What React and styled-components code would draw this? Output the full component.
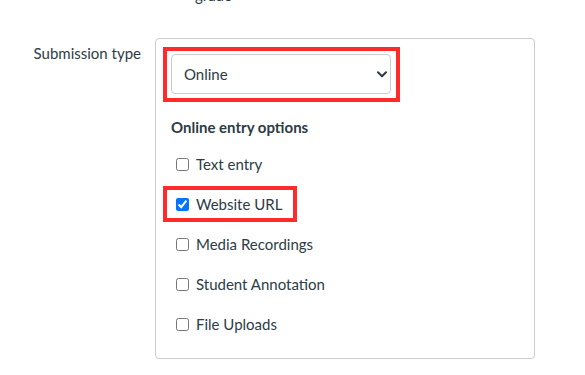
import React from "react";
import styled, { createGlobalStyle } from "styled-components";

const GlobalStyle = createGlobalStyle`
  html, body {
    margin: 0;
    padding: 0;
    background: #ffffff;
  }
  body {
    font-family: Lato, "Noto Sans", "Liberation Sans", sans-serif;
    color: #2d3b45;
    overflow: hidden;
  }
`;

const Page = styled.div`
  width: 585px;
  height: 375px;
  overflow: hidden;
`;

const GradeNote = styled.div`
  margin: -14px 0 0 195px;
  font-size: 15px;
  line-height: 18px;
`;

const FormRow = styled.div`
  display: grid;
  grid-template-columns: 155px 380px;
  margin-top: 34px;
  align-items: start;
`;

const FieldLabel = styled.div`
  text-align: right;
  padding: 6px 14px 0 0;
  font-size: 15px;
  line-height: 18px;
`;

const Fieldset = styled.div`
  box-sizing: border-box;
  border: 1px solid #c7cdd1;
  border-radius: 4px;
  padding: 8px 0 16px 7px;
  display: flex;
  flex-direction: column;
  align-items: flex-start;
`;

const Highlight = styled.div`
  border: 4px solid ${(p) => (p.$on ? "#ff2a2a" : "transparent")};
`;

const SelectFrame = styled(Highlight)`
  padding: 3px 5px 4px 4px;
`;

const SelectWrap = styled.div`
  position: relative;
  width: 220px;
  height: 40px;
`;

const Select = styled.select`
  appearance: none;
  -webkit-appearance: none;
  box-sizing: border-box;
  width: 100%;
  height: 100%;
  border: 1px solid #c7cdd1;
  border-radius: 4px;
  background: #ffffff;
  padding: 0 30px 0 12px;
  font-family: Lato, "Noto Sans", "Liberation Sans", sans-serif;
  font-size: 15px;
  color: #2d3b45;
  outline: none;
`;

const Chevron = styled.svg`
  position: absolute;
  right: 4px;
  top: 17px;
  pointer-events: none;
`;

const Heading = styled.div`
  margin: 16px 0 10px 8px;
  font-size: 15px;
  line-height: 18px;
  font-weight: 700;
`;

const OptionList = styled.div`
  display: flex;
  flex-direction: column;
  align-items: flex-start;
  gap: 4px;
`;

const OptionRow = styled(Highlight)`
  box-sizing: border-box;
  height: 36px;
  display: inline-flex;
  align-items: center;
  gap: 7px;
  padding: 0 11px 0 9px;
  font-size: 15px;
  line-height: 18px;
  cursor: default;
`;

const Checkbox = styled.input`
  width: 13px;
  height: 13px;
  margin: 0;
`;

const options = [
  { label: "Text entry", checked: false },
  { label: "Website URL", checked: true },
  { label: "Media Recordings", checked: false },
  { label: "Student Annotation", checked: false },
  { label: "File Uploads", checked: false },
];

export default function App() {
  return (
    <Page>
      <GlobalStyle />
      <GradeNote>grade</GradeNote>
      <FormRow>
        <FieldLabel>Submission type</FieldLabel>
        <Fieldset>
          <SelectFrame $on>
            <SelectWrap>
              <Select defaultValue="online">
                <option value="online">Online</option>
                <option value="paper">On Paper</option>
                <option value="none">No Submission</option>
              </Select>
              <Chevron width="10" height="7" viewBox="0 0 10 7">
                <path
                  d="M1 1.2 L5 5.2 L9 1.2"
                  fill="none"
                  stroke="#2d3b45"
                  strokeWidth="2"
                  strokeLinecap="round"
                  strokeLinejoin="round"
                />
              </Chevron>
            </SelectWrap>
          </SelectFrame>
          <Heading>Online entry options</Heading>
          <OptionList>
            {options.map((o) => (
              <OptionRow as="label" key={o.label} $on={o.checked}>
                <Checkbox type="checkbox" defaultChecked={o.checked} />
                {o.label}
              </OptionRow>
            ))}
          </OptionList>
        </Fieldset>
      </FormRow>
    </Page>
  );
}
